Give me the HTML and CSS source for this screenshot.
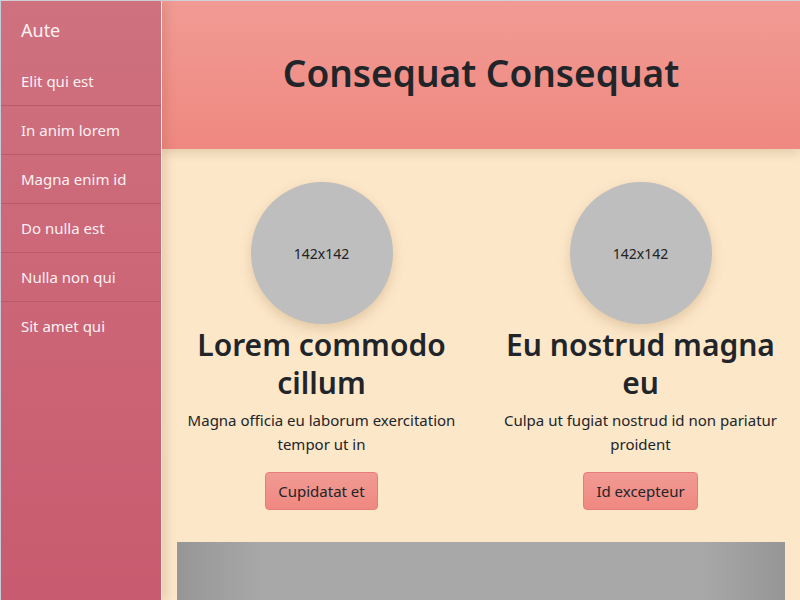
FILE: index.html
```html
<!DOCTYPE html>
<html>
<head>
<meta charset="utf-8">
<link rel="stylesheet" href="styles.css">
</head>
<body>
<div class="page">
  <nav class="sidebar">
    <div class="brand">Aute</div>
    <ul class="menu">
      <li>Elit qui est</li>
      <li>In anim lorem</li>
      <li>Magna enim id</li>
      <li>Do nulla est</li>
      <li>Nulla non qui</li>
      <li>Sit amet qui</li>
    </ul>
  </nav>
  <div class="main">
    <header class="header"><h1>Consequat Consequat</h1></header>
    <section class="content">
      <div class="cards">
        <div class="card">
          <div class="avatar">142x142</div>
          <h2>Lorem commodo cillum</h2>
          <p>Magna officia eu laborum exercitation tempor ut in</p>
          <button class="btn">Cupidatat et</button>
        </div>
        <div class="card">
          <div class="avatar">142x142</div>
          <h2>Eu nostrud magna eu</h2>
          <p>Culpa ut fugiat nostrud id non pariatur proident</p>
          <button class="btn">Id excepteur</button>
        </div>
      </div>
      <div class="banner"></div>
    </section>
  </div>
</div>
</body>
</html>
```

FILE: styles.css
```css
* { box-sizing: border-box; }
html, body { margin: 0; padding: 0; height: 100%; overflow: hidden; }
body {
  font-family: "Noto Sans", "Open Sans", sans-serif;
  color: #212529;
  background: #fde8c8;
}
.page {
  display: flex;
  height: 600px;
  border-top: 1px solid #d3d9e2;
  border-left: 1px solid #c9d2dd;
}
.sidebar {
  width: 161px;
  flex: none;
  background: linear-gradient(#cf717f, #c85b6f);
  border-right: 1px solid #f3eef0;
  color: #fdf1f3;
  position: relative;
  z-index: 2;
  box-shadow: 4px 0 10px rgba(120, 80, 40, 0.18);
}
.brand {
  font-size: 18px;
  padding: 17px 20px 15px;
  line-height: 24px;
}
.menu { list-style: none; margin: 0; padding: 0; }
.menu li {
  font-size: 15px;
  line-height: 20px;
  padding: 14px 20px 14px 20px;
  border-bottom: 1px solid #b95a6c;
}
.menu li:last-child { border-bottom: none; }
.main {
  flex: 1;
  display: flex;
  flex-direction: column;
  min-width: 0;
}
.header {
  flex: none;
  height: 148px;
  background: linear-gradient(#f19b94, #ef8880);
  display: flex;
  align-items: center;
  justify-content: center;
  position: relative;
  z-index: 1;
  box-shadow: 0 3px 10px rgba(120, 80, 40, 0.2);
}
.header h1 {
  margin: 0 0 5px;
  font-size: 37px;
  font-weight: 600;
  letter-spacing: 0;
}
.content {
  flex: 1;
  background: #fce7c9;
  padding: 33px 15px 0;
}
.cards {
  display: flex;
  margin: 0 -15px;
}
.card {
  flex: 1;
  text-align: center;
  padding: 0 15px;
  display: flex;
  flex-direction: column;
  align-items: center;
}
.avatar {
  width: 142px;
  height: 142px;
  border-radius: 50%;
  background: #bebebe;
  display: flex;
  align-items: center;
  justify-content: center;
  font-size: 14px;
  color: #222;
  box-shadow: 0 5px 12px rgba(150, 110, 60, 0.25);
}
.card h2 {
  margin: 2px 0 0;
  font-size: 30px;
  line-height: 38px;
  font-weight: 600;
}
.card p {
  margin: 6px 0 0;
  font-size: 15px;
  line-height: 24px;
}
.btn {
  margin-top: 16px;
  font: inherit;
  font-size: 15px;
  color: #212529;
  padding: 6px 12px;
  height: 38px;
  border: 1px solid #e67d78;
  border-radius: 4px;
  background: linear-gradient(#f19b94, #ef8880);
}
.banner {
  margin-top: 32px;
  height: 80px;
  background: linear-gradient(90deg, #969696 0%, #a8a8a8 14%, #a8a8a8 86%, #969696 100%);
}
```
